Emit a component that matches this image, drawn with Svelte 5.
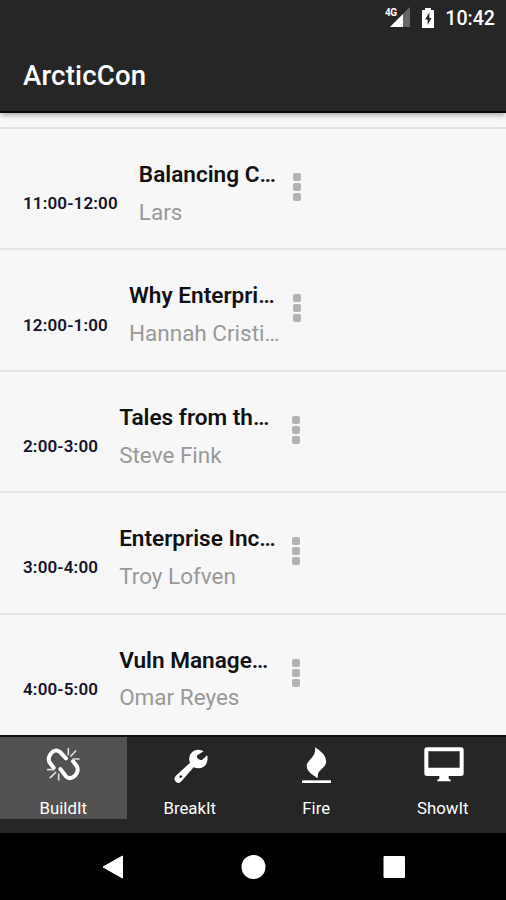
<script lang="ts">
  type Session = { time: string; title: string; speaker: string };
  type Tab = { id: string; label: string };

  const sessions: Session[] = [
    { time: "11:00-12:00", title: "Balancing C…", speaker: "Lars" },
    { time: "12:00-1:00", title: "Why Enterpri…", speaker: "Hannah Cristi…" },
    { time: "2:00-3:00", title: "Tales from th…", speaker: "Steve Fink" },
    { time: "3:00-4:00", title: "Enterprise Inc…", speaker: "Troy Lofven" },
    { time: "4:00-5:00", title: "Vuln Manage…", speaker: "Omar Reyes" },
  ];

  const tabs: Tab[] = [
    { id: "build", label: "BuildIt" },
    { id: "break", label: "BreakIt" },
    { id: "fire", label: "Fire" },
    { id: "show", label: "ShowIt" },
  ];

  let active = $state("build");
</script>

<div class="screen">
  <div class="status-bar">
    <svg class="signal" viewBox="0 0 26 22">
      <path d="M25 1V21H5Z" fill="#666" />
      <path d="M18 8V21H5Z" fill="#fff" />
      <text x="0" y="9.5">4G</text>
    </svg>
    <svg class="battery" viewBox="0 0 14 22">
      <path d="M4 1H10V3H13V21H1V3H4Z" fill="#fff" />
      <path d="M8.4 5.5L4 12.5H6.6V18L10.6 11H8.4Z" fill="#262626" />
    </svg>
    <span class="clock">10:42</span>
  </div>

  <header class="app-bar">
    <h1>ArcticCon</h1>
  </header>

  <main class="sessions">
    {#each sessions as session (session.time)}
      <article class="session">
        <span class="time">{session.time}</span>
        <div class="details">
          <span class="title">{session.title}</span>
          <span class="speaker">{session.speaker}</span>
        </div>
        <button type="button" class="more" aria-label="More">
          <i></i><i></i><i></i>
        </button>
      </article>
    {/each}
  </main>

  <nav class="tabs">
    {#each tabs as tab (tab.id)}
      <button
        type="button"
        class="tab"
        class:tab--active={active === tab.id}
        onclick={() => (active = tab.id)}
      >
        <svg viewBox="0 0 120 120">
          {#if tab.id === "build"}
            <g fill="none" stroke="#fff" stroke-linecap="round">
              <path
                stroke-width="12"
                stroke-linejoin="round"
                d="M32 71L21 57Q13 44 22 31Q35 12 51 24L69 43M52 75L70 98Q83 109 97 94Q109 80 101 66L90 52"
              />
              <path
                stroke="#ddd"
                stroke-width="5"
                d="M76 32V14M84 36L98 21M90 45H108M47 90V108M38 85L22 101M32 77H14"
              />
            </g>
          {:else if tab.id === "break"}
            <path
              fill="#fff"
              fill-rule="evenodd"
              d="M101 22Q94 17 86 17Q70 17 62 29Q54 41 60 56L17 96Q10 104 16 112Q23 121 33 113L71 70Q88 77 101 68Q113 60 113 43Q113 37 111 34L97 47Q92 50 86 46L82 42Q79 37 83 33ZM32 94a4 4 0 1 0 .1 0Z"
            />
          {:else if tab.id === "fire"}
            <path
              fill="#fff"
              d="M57 10C72 20 93 35 90 56C87 71 71 76 66 89L65 103C53 95 33 84 32 67C31 48 62 40 57 10Z"
            />
            <rect x="18" y="109" width="87" height="8" fill="#fff" />
          {:else}
            <path
              fill="#fff"
              fill-rule="evenodd"
              d="M12 10H114Q122 10 122 18V88Q122 96 114 96H77V103Q78 107 83 107V112H43V107Q48 107 49 103V96H12Q4 96 4 88V18Q4 10 12 10ZM16 22V71H110V22Z"
            />
          {/if}
        </svg>
        <span>{tab.label}</span>
      </button>
    {/each}
  </nav>

  <div class="system-nav">
    <svg viewBox="0 0 24 24">
      <path d="M3 12L22.500 1V23Z" fill="#fff" stroke="#fff" stroke-linejoin="round" />
    </svg>
    <svg viewBox="0 0 24 24"><circle cx="12.500" cy="12" r="12" fill="#fff" /></svg>
    <svg viewBox="0 0 24 24"><rect x="1.500" y="1" width="21.500" height="22" rx="1" fill="#fff" /></svg>
  </div>
</div>

<style>
  :global(body) {
    margin: 0;
    background: #000;
  }

  .screen {
    display: flex;
    flex-direction: column;
    width: 506px;
    height: 900px;
    overflow: hidden;
    background: #f7f7f7;
    font-family: Roboto, "Liberation Sans", sans-serif;
  }

  button {
    border: 0;
    padding: 0;
    background: transparent;
    font: inherit;
  }

  .status-bar {
    display: flex;
    align-items: center;
    justify-content: flex-end;
    box-sizing: border-box;
    height: 36px;
    padding-right: 11px;
    background: #262626;
    color: #fff;
  }

  .signal {
    width: 26px;
    height: 22px;
    margin: 0 10px 2px 0;
    overflow: visible;
  }

  .signal text {
    fill: #fff;
    font-size: 10px;
    font-weight: 700;
    letter-spacing: -0.5px;
    stroke: #262626;
    stroke-width: 2px;
    paint-order: stroke;
  }

  .battery {
    width: 14px;
    height: 22px;
    margin: 0 10px 1px 0;
  }

  .clock {
    font-size: 19.6px;
    font-weight: 500;
  }

  .app-bar {
    display: flex;
    align-items: center;
    box-sizing: border-box;
    height: 77px;
    padding: 4px 0 0 23px;
    border-bottom: 2px solid #080808;
    background: #262626;
    box-shadow: 0 4px 4px -1px rgba(0, 0, 0, 0.25);
    z-index: 1;
  }

  h1 {
    margin: 0;
    color: #fff;
    font-size: 27.5px;
    font-weight: 500;
    letter-spacing: 0.2px;
  }

  .sessions {
    flex: none;
    height: 608px;
    margin-top: 14px;
  }

  .session {
    display: flex;
    box-sizing: border-box;
    height: 121.4px;
    padding-left: 23px;
    border-top: 2px solid #e3e3e3;
  }

  .time {
    margin: 64.2px 21px 0 0;
    color: #14142a;
    font-size: 17px;
    font-weight: 600;
    line-height: 20px;
    letter-spacing: 0.15px;
  }

  .details {
    display: flex;
    flex-direction: column;
    flex: none;
    width: 151px;
    padding-top: 31px;
    white-space: nowrap;
  }

  .session:nth-child(1) .details {
    width: 141px;
  }

  .session:nth-child(n + 3) .details {
    width: 160px;
  }

  .title {
    color: #111;
    font-size: 22.6px;
    font-weight: 600;
    line-height: 30px;
  }

  .speaker {
    margin-top: 6.8px;
    color: #999;
    font-size: 22.5px;
    line-height: 30px;
  }

  .more {
    display: flex;
    flex-direction: column;
    align-self: flex-start;
    gap: 2px;
    margin: 44px 0 0 13px;
  }

  .more i {
    width: 8px;
    height: 8px;
    border-radius: 2px;
    background: #b3b3b3;
  }

  .tabs {
    display: flex;
    flex: none;
    box-sizing: border-box;
    height: 98px;
    border-top: 2px solid #101010;
    background: #262626;
    z-index: 1;
  }

  .tab {
    display: flex;
    flex: 1;
    flex-direction: column;
    align-items: center;
    height: 82px;
    padding-top: 7px;
    color: #fff;
    font-size: 16.8px;
    line-height: 20px;
  }

  .tab--active {
    background: #525252;
  }

  .tab svg {
    width: 40px;
    height: 40px;
    margin-bottom: 14px;
    overflow: visible;
  }

  .system-nav {
    display: flex;
    flex: 1;
    align-items: center;
    justify-content: center;
    gap: 117px;
    background: #000;
  }

  .system-nav svg {
    width: 24px;
    height: 24px;
    overflow: visible;
  }
</style>
